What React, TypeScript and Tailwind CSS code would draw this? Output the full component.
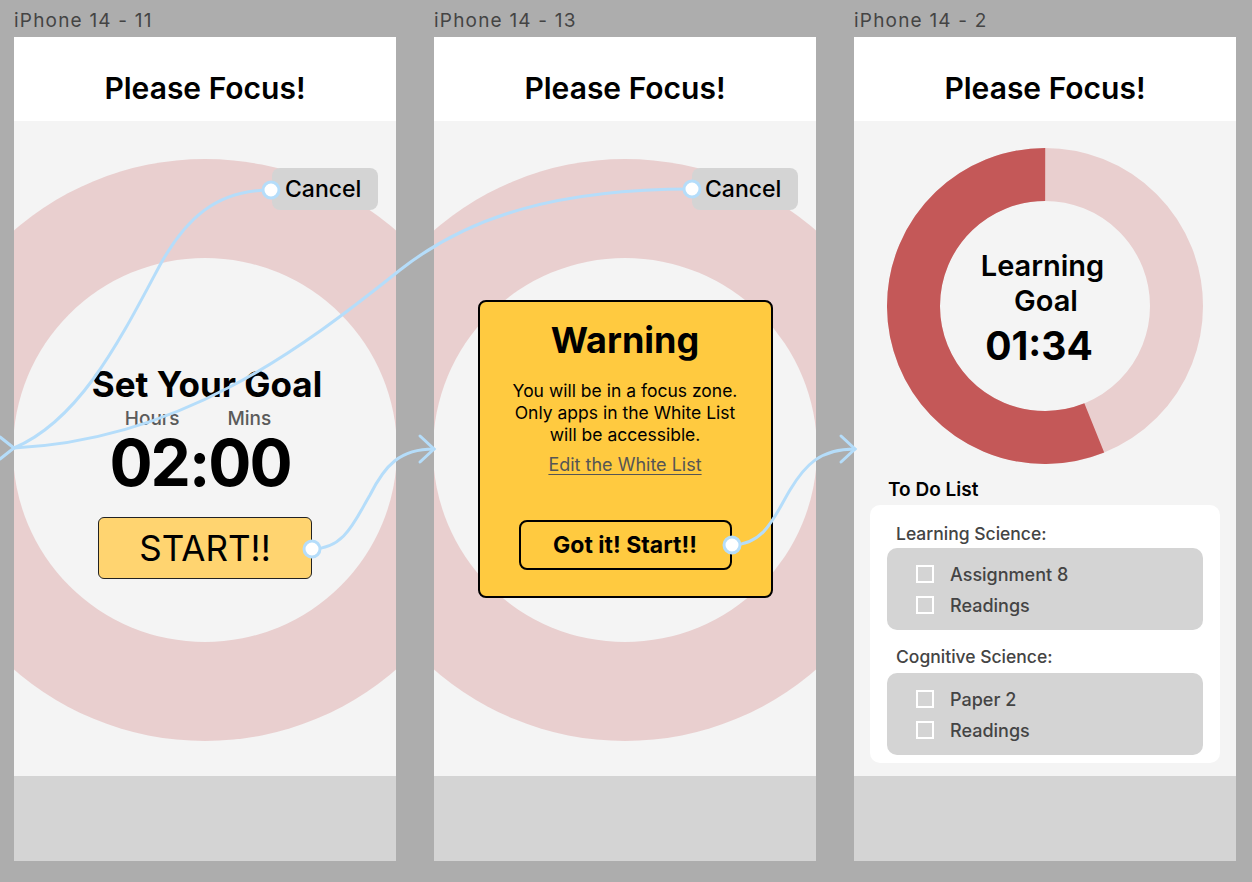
import React from "react";

type FrameProps = {
  label: string;
  children: React.ReactNode;
};

const Frame = ({ label, children }: FrameProps) => {
  return (
    <div className="flex flex-col w-[382px] shrink-0">
      <div className="h-[22px] text-[19px] leading-[22px] tracking-[1.2px] text-[#444]">{label}</div>
      <div className="mt-[5px] flex flex-col h-[824px]">
        <div className="h-[84px] bg-white pt-[33px] text-center text-[30px] leading-[36px] font-semibold text-black">
          Please Focus!
        </div>
        <div className="relative h-[655px] bg-[#f4f4f4] overflow-hidden">{children}</div>
        <div className="h-[85px] bg-[#d4d4d4]" />
      </div>
    </div>
  );
};

const Ring = () => (
  <>
    <div className="absolute left-[-100px] top-[38px] w-[582px] h-[582px] rounded-full bg-[#e9cfcf]" />
    <div className="absolute left-[-1px] top-[137px] w-[384px] h-[384px] rounded-full bg-[#f4f4f4]" />
  </>
);

const CancelButton = () => (
  <div className="self-end mr-[18px] mt-[47px] h-[42px] w-[106px] rounded-[8px] bg-[#d4d4d4] flex items-center pl-[13px] pt-[1px] text-[23px] font-medium text-black">
    Cancel
  </div>
);

const SetGoal = () => (
  <>
    <Ring />
    <div className="relative flex flex-col items-center">
      <CancelButton />
      <div className="mt-[157px] ml-[4px] text-[35px] leading-none font-bold text-black">Set Your Goal</div>
      <div className="mt-[7px] mr-[14px] flex gap-[48px] text-[19px] leading-none font-medium text-[#5b5b5b]">
        <span>Hours</span>
        <span>Mins</span>
      </div>
      <div className="mt-[3px] mr-[10px] text-[64px] leading-none font-bold tracking-[-2px] text-black">02:00</div>
      <div className="mt-[22px] w-[214px] h-[62px] bg-[#ffd470] border border-[#222] rounded-[6px] flex items-center justify-center text-[35px] text-black">
        START!!
      </div>
    </div>
  </>
);

const Warning = () => (
  <>
    <Ring />
    <div className="relative flex flex-col items-center">
      <CancelButton />
      <div className="mt-[90px] w-[295px] h-[298px] border-2 border-black rounded-[8px] bg-[#ffca40] flex flex-col items-center">
        <div className="mt-[20px] text-[36px] leading-none font-bold text-black">Warning</div>
        <div className="mt-[22px] text-center text-[17.5px] leading-[22px] text-black">
          You will be in a focus zone.
          <br />
          Only apps in the White List
          <br />
          will be accessible.
        </div>
        <div className="mt-[8px] text-[18px] leading-[22px] text-[#555] underline underline-offset-[3px]">
          Edit the White List
        </div>
        <div className="mt-[44px] w-[213px] h-[50px] border-2 border-black rounded-[8px] flex items-center justify-center text-[23px] font-bold text-black">
          Got it! Start!!
        </div>
      </div>
    </div>
  </>
);

const Donut = () => {
  const r = 131.5;
  const c = 2 * Math.PI * r;
  const dark = (202 / 360) * c;
  return (
    <svg width="316" height="316" viewBox="0 0 316 316" className="[grid-area:1/1]">
      <circle cx="158" cy="158" r={r} fill="none" stroke="#e9cfcf" strokeWidth="53" />
      <circle
        cx="158"
        cy="158"
        r={r}
        fill="none"
        stroke="#c45858"
        strokeWidth="53"
        strokeDasharray={`${dark} ${c}`}
        transform="rotate(68 158 158)"
      />
    </svg>
  );
};

const TodoRow = ({ text }: { text: string }) => (
  <div className="h-[31px] flex items-center gap-[16px]">
    <div className="w-[18px] h-[18px] border-2 border-white" />
    <span className="pt-[3px] text-[18px] leading-none font-medium text-[#444]">{text}</span>
  </div>
);

const Progress = () => (
  <div className="flex flex-col items-center">
    <div className="mt-[27px] grid">
      <Donut />
      <div className="[grid-area:1/1] flex flex-col items-center justify-center text-black">
        <div className="mr-[5px] text-[29px] leading-[35px] font-semibold">Learning</div>
        <div className="ml-[2px] text-[29px] leading-[35px] font-semibold">Goal</div>
        <div className="mt-[8px] mr-[12px] text-[39px] leading-none font-bold">01:34</div>
      </div>
    </div>
    <div className="self-start mt-[15px] ml-[34px] text-[19px] leading-[22px] font-semibold text-black">To Do List</div>
    <div className="self-stretch mt-[4px] mx-[16px] bg-white rounded-[10px] pt-[18px] pb-[8px]">
      <div className="ml-[26px] text-[17.5px] leading-[22px] font-medium text-[#444]">Learning Science:</div>
      <div className="mt-[3px] mx-[17px] rounded-[10px] bg-[#d4d4d4] py-[10px] pl-[29px]">
        <TodoRow text="Assignment 8" />
        <TodoRow text="Readings" />
      </div>
      <div className="mt-[16px] ml-[26px] text-[17.5px] leading-[22px] font-medium text-[#444]">Cognitive Science:</div>
      <div className="mt-[5px] mx-[17px] rounded-[10px] bg-[#d4d4d4] py-[10px] pl-[29px]">
        <TodoRow text="Paper 2" />
        <TodoRow text="Readings" />
      </div>
    </div>
  </div>
);

const Connectors = () => {
  const line = "#b5ddfa";
  return (
    <svg className="absolute inset-0 pointer-events-none" width="1252" height="882" viewBox="0 0 1252 882">
      <g fill="none" stroke={line} strokeWidth="3" strokeLinecap="round">
        <path d="M271 190 C 215 190 185 220 160 265 C 120 340 80 420 14 448" />
        <path d="M692 189 C 560 189 470 215 400 270 C 300 350 180 440 14 448" />
        <path d="M312 549 C 345 549 355 520 370 495 C 385 465 400 449 434 449" />
        <path d="M732 545 C 765 545 775 515 790 490 C 805 465 820 449 855 449" />
        <path d="M0 437 L14 448 L0 459" />
        <path d="M420 436 L434 449 L420 462" />
        <path d="M841 436 L855 449 L841 462" />
      </g>
      <g fill="#fff" stroke={line} strokeWidth="3">
        <circle cx="271" cy="190" r="8" />
        <circle cx="692" cy="189" r="8" />
        <circle cx="312" cy="549" r="8" />
        <circle cx="732" cy="545" r="8" />
      </g>
    </svg>
  );
};

const App = () => {
  return (
    <div className="relative w-[1252px] h-[882px] overflow-hidden bg-[#adadad] font-['Inter',sans-serif]">
      <div className="flex gap-[38px] pl-[14px] pt-[10px]">
        <Frame label="iPhone 14 - 11">
          <SetGoal />
        </Frame>
        <Frame label="iPhone 14 - 13">
          <Warning />
        </Frame>
        <Frame label="iPhone 14 - 2">
          <Progress />
        </Frame>
      </div>
      <Connectors />
    </div>
  );
};

export default App;
